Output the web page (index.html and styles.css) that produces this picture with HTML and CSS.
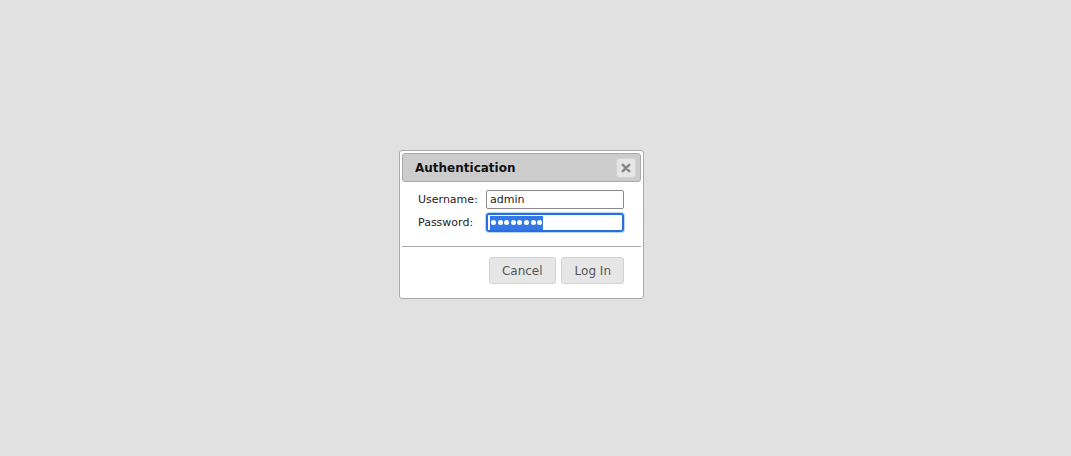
FILE: index.html
```html
<!DOCTYPE html>
<html>
<head>
<meta charset="utf-8">
<link rel="stylesheet" href="styles.css">
</head>
<body>
<div class="dialog">
  <div class="titlebar">
    <span class="title">Authentication</span>
    <button class="close" title="Close">
      <svg width="10" height="10" viewBox="0 0 10 10"><path d="M1.8 1.8L8.2 8.2M8.2 1.8L1.8 8.2" stroke="#888" stroke-width="2.6" stroke-linecap="round"/></svg>
    </button>
  </div>
  <div class="content">
    <label class="label">Username:</label>
    <div class="field">admin</div>
    <label class="label">Password:</label>
    <div class="field focused"><span class="sel" aria-label="password"><i></i><i></i><i></i><i></i><i></i><i></i><i></i><i></i></span></div>
  </div>
  <div class="buttonpane">
    <button class="btn">Cancel</button>
    <button class="btn login">Log In</button>
  </div>
</div>
</body>
</html>
```

FILE: styles.css
```css
html, body {
  margin: 0;
  padding: 0;
}
body {
  background: #e1e1e1;
  width: 1071px;
  height: 456px;
  font-family: "DejaVu Sans", sans-serif;
  padding: 150px 0 0 399px;
  box-sizing: border-box;
}
.dialog {
  width: 245px;
  box-sizing: border-box;
  background: #fff;
  border: 1px solid #aaa;
  border-radius: 3px;
  padding: 2px;
  color: #222;
}
.titlebar {
  height: 29px;
  box-sizing: border-box;
  background: #cccccc;
  border: 1px solid #aaa;
  border-radius: 3px;
  display: flex;
  align-items: center;
  padding: 0 4px 0 12px;
}
.title {
  font-weight: bold;
  font-size: 12px;
  color: #111;
}
.close {
  margin-left: auto;
  width: 20px;
  height: 20px;
  padding: 0;
  border: 1px solid #d3d3d3;
  border-radius: 3px;
  background: #e6e6e6;
  display: flex;
  align-items: center;
  justify-content: center;
}
.close svg { display: block; }
.content {
  display: grid;
  grid-template-columns: 68px 138px;
  row-gap: 4px;
  align-items: center;
  padding: 8px 16px 14px 16px;
}
.label {
  font-size: 11px;
  color: #222;
}
.field {
  height: 19px;
  box-sizing: border-box;
  border: 1px solid #8a8a8a;
  border-radius: 2px;
  font-size: 11px;
  color: #222;
  padding: 0 3px;
  display: flex;
  align-items: center;
  line-height: 1;
}
.field.focused {
  border: 2px solid #2a6fe0;
  box-shadow: 0 0 0 1px #bcd6f8;
  border-radius: 3px;
  padding: 0 2px;
}
.sel {
  background: #3478e5;
  height: 14px;
  display: flex;
  align-items: center;
  gap: 1.6px;
  padding: 0 1px;
}
.sel i {
  display: block;
  width: 5px;
  height: 5px;
  border-radius: 50%;
  background: #fff;
}
.buttonpane {
  border-top: 1px solid #aaa;
  display: flex;
  justify-content: flex-end;
  gap: 5px;
  padding: 10px 17px 12px 0;
}
.btn {
  height: 27px;
  padding: 0 12px;
  border: 1px solid #d3d3d3;
  border-radius: 3px;
  background: #e6e6e6;
  color: #555;
  font-family: "DejaVu Sans", sans-serif;
  font-size: 12px;
}
.btn.login {
  padding: 0 12px 0 13px;
}
```
